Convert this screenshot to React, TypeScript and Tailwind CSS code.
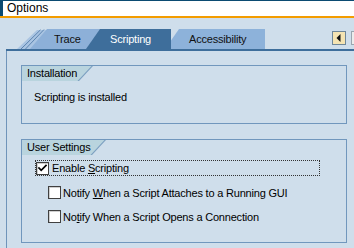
import React from "react";

function Check() {
  return (
    <svg width="11" height="11" viewBox="0 0 11 11" className="block">
      <path d="M2 5 L4.2 7.3 L9 2.4" fill="none" stroke="#000" strokeWidth="1.7" strokeLinecap="square" />
    </svg>
  );
}

function Box({ checked }: { checked?: boolean }) {
  return (
    <div className="w-[13px] h-[13px] shrink-0 border border-[#404040] bg-white shadow-[inset_1px_1px_0_#cfcfcf] flex items-center justify-center">
      {checked ? <Check /> : null}
    </div>
  );
}

function GroupHeader({ label, width }: { label: string; width: string }) {
  return (
    <div className={`relative h-[15px] ${width}`}>
      <div className="absolute inset-0 bg-[#7b9fc0] [clip-path:polygon(0_0,100%_0,calc(100%-14px)_100%,0_100%)]" />
      <div className="absolute inset-0 bg-[#b9d4de] [clip-path:polygon(0_0,calc(100%-1.5px)_0,calc(100%-15.5px)_100%,0_100%)]" />
      <div className="relative pl-[5px] text-[11px] leading-[15px] tracking-[-0.2px] text-black">{label}</div>
    </div>
  );
}

export default function App() {
  return (
    <div className="w-[354px] h-[248px] overflow-hidden bg-[#cfdeeb] font-['Liberation_Sans',Arial,sans-serif] flex flex-col">
      {/* Title bar */}
      <div className="flex flex-col shrink-0">
        <div className="h-[16px] border-t border-l-[3px] border-[#0b4b72] bg-white pl-[4px] text-[12px] leading-[15px] text-black">
          Options
        </div>
        <div className="h-[2px] bg-[#f39c00]" />
      </div>

      {/* Tab strip */}
      <div className="relative mt-[11px] h-[20px] flex shrink-0">
        <svg className="absolute left-0 top-0" width="60" height="20" viewBox="0 0 60 20">
          <polygon points="17,20 37,1 50,1 50,20" fill="#a9c4e2" />
          <line x1="21" y1="20" x2="40.5" y2="0.8" stroke="#5d85b0" strokeWidth="1" />
          <line x1="25.5" y1="20" x2="44" y2="0.5" stroke="#5d85b0" strokeWidth="1" />
        </svg>
        <div className="relative ml-[30px] w-[70px] h-[20px] shrink-0 bg-[#8db0d8] [clip-path:polygon(0_100%,17px_0,100%_0,100%_100%)] pl-[24px] text-[11px] leading-[20px] tracking-[-0.2px] text-[#111]">
          Trace
        </div>
        <div className="relative z-10 -ml-[14px] w-[85px] h-[20px] shrink-0 bg-[#3e6e9b] [clip-path:polygon(0_100%,14px_0,100%_0,100%_100%)] pl-[24px] text-[11px] leading-[20px] tracking-[-0.2px] text-white">
          Scripting
        </div>
        <div className="relative -ml-[6px] w-[100px] h-[20px] shrink-0 bg-[#8db2da] [clip-path:polygon(0_100%,14px_0,100%_0,100%_100%)] pl-[24px] text-[11px] leading-[20px] tracking-[-0.2px] text-[#111]">
          Accessibility
        </div>
        <div className="ml-[67px] mt-[2px] w-[14px] h-[14px] shrink-0 border border-[#6f8799] bg-[#f5e4b2] flex items-center justify-center">
          <svg width="6" height="8" viewBox="0 0 6 8" className="block">
            <polygon points="4.5,0 4.5,8 0.5,4" fill="#111" />
          </svg>
        </div>
        <div className="ml-[5px] mt-[2px] w-[14px] h-[14px] shrink-0 border border-[#9aa6b0] bg-[#ececec]" />
      </div>
      <div className="ml-[6px] h-[2px] bg-[#3e6e9b] shrink-0" />

      {/* Frame */}
      <div className="ml-[6px] flex-1 border-l border-[#6f94ba] pl-[14px] pt-[14px] flex flex-col">
        {/* Installation */}
        <div className="w-[326px] h-[59px] border border-[#7197bd] flex flex-col">
          <GroupHeader label="Installation" width="w-[71px]" />
          <div className="mt-[9px] pl-[12px] text-[11px] leading-[14px] tracking-[-0.2px] text-black">
            Scripting is installed
          </div>
        </div>

        {/* User Settings */}
        <div className="mt-[15px] w-[326px] h-[104px] border border-[#7197bd] flex flex-col">
          <GroupHeader label="User Settings" width="w-[84px]" />
          <div className="mt-[5px] ml-[13px] w-[285px] h-[16px] border border-dotted border-[#333] flex items-center">
            <Box checked />
            <div className="ml-[3px] text-[11px] leading-[14px] tracking-[-0.2px] text-black">
              Enable <span className="underline underline-offset-[1px]">S</span>cripting
            </div>
          </div>
          <div className="mt-[9px] ml-[26px] h-[15px] flex items-center">
            <Box />
            <div className="ml-[2px] text-[11px] leading-[14px] tracking-[-0.2px] text-black">
              Notify <span className="underline underline-offset-[1px]">W</span>hen a Script Attaches to a Running GUI
            </div>
          </div>
          <div className="mt-[9px] ml-[26px] h-[15px] flex items-center">
            <Box />
            <div className="ml-[2px] text-[11px] leading-[14px] tracking-[-0.2px] text-black">
              No<span className="underline underline-offset-[1px]">t</span>ify When a Script Opens a Connection
            </div>
          </div>
        </div>
      </div>
    </div>
  );
}
